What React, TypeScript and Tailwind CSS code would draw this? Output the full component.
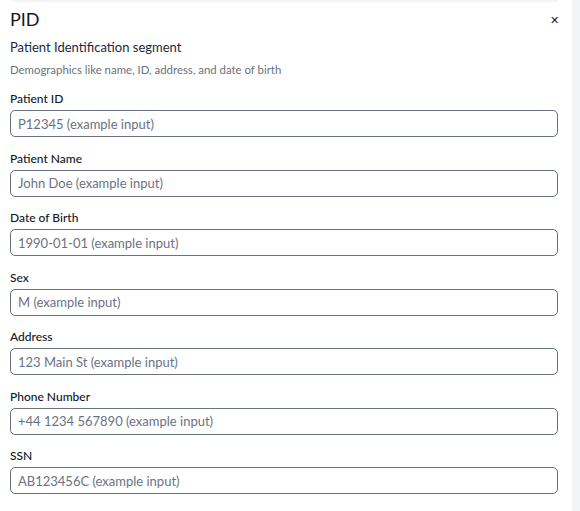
import React from "react";

type Field = { label: string; placeholder: string };

const fields: Field[] = [
  { label: "Patient ID", placeholder: "P12345 (example input)" },
  { label: "Patient Name", placeholder: "John Doe (example input)" },
  { label: "Date of Birth", placeholder: "1990-01-01 (example input)" },
  { label: "Sex", placeholder: "M (example input)" },
  { label: "Address", placeholder: "123 Main St (example input)" },
  { label: "Phone Number", placeholder: "+44 1234 567890 (example input)" },
  { label: "SSN", placeholder: "AB123456C (example input)" },
];

export default function App() {
  return (
    <div
      className="flex h-[511px] w-[580px] overflow-hidden bg-white"
      style={{ fontFamily: "Lato, 'Noto Sans', sans-serif" }}
    >
      <div className="flex-1 min-w-0">
        <div className="mx-[12px] mr-[14px] h-[2px] rounded-b bg-gray-100"></div>
        <div className="px-[10px] pr-[14px]">
          <div className="flex items-center justify-between h-[30px] mt-[2px]">
            <h2 className="text-[18px] leading-[28px] text-gray-900">PID</h2>
            <button className="text-[11px] leading-none text-gray-900 mr-[-1px]">✕</button>
          </div>
          <p className="mt-[4px] text-[13px] leading-[18px] text-gray-800">
            Patient Identification segment
          </p>
          <p className="mt-[6px] text-[11.4px] leading-[16px] text-gray-500">
            Demographics like name, ID, address, and date of birth
          </p>

          <div className="mt-[13px] flex flex-col gap-[13.5px]">
            {fields.map((f) => (
              <div key={f.label}>
                <label className="block text-[12px] leading-[16px] font-medium text-gray-900 mb-[3px]">
                  {f.label}
                </label>
                <input
                  type="text"
                  placeholder={f.placeholder}
                  className="block w-full h-[27px] rounded-[5px] border border-gray-500 px-[7px] text-[13px] text-gray-800 placeholder:text-gray-500 outline-none"
                  style={{ fontFamily: "Lato, 'Noto Sans', sans-serif" }}
                />
              </div>
            ))}
          </div>
        </div>
      </div>
      <div className="w-[8px] bg-gray-100"></div>
    </div>
  );
}
